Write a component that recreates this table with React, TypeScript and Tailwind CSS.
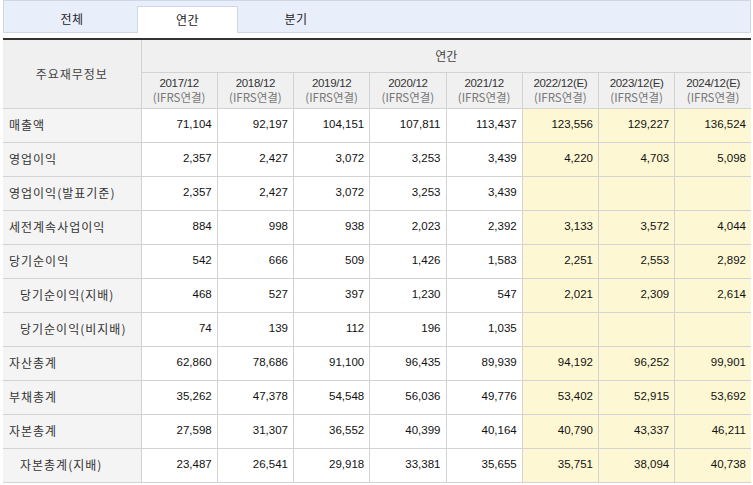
import React from 'react';

const years = [
  { label: '2017/12', est: false },
  { label: '2018/12', est: false },
  { label: '2019/12', est: false },
  { label: '2020/12', est: false },
  { label: '2021/12', est: false },
  { label: '2022/12(E)', est: true },
  { label: '2023/12(E)', est: true },
  { label: '2024/12(E)', est: true },
];

interface Row {
  name: string;
  sub?: boolean;
  values: string[];
}

const rows: Row[] = [
  { name: '매출액', values: ['71,104', '92,197', '104,151', '107,811', '113,437', '123,556', '129,227', '136,524'] },
  { name: '영업이익', values: ['2,357', '2,427', '3,072', '3,253', '3,439', '4,220', '4,703', '5,098'] },
  { name: '영업이익(발표기준)', values: ['2,357', '2,427', '3,072', '3,253', '3,439', '', '', ''] },
  { name: '세전계속사업이익', values: ['884', '998', '938', '2,023', '2,392', '3,133', '3,572', '4,044'] },
  { name: '당기순이익', values: ['542', '666', '509', '1,426', '1,583', '2,251', '2,553', '2,892'] },
  { name: '당기순이익(지배)', sub: true, values: ['468', '527', '397', '1,230', '547', '2,021', '2,309', '2,614'] },
  { name: '당기순이익(비지배)', sub: true, values: ['74', '139', '112', '196', '1,035', '', '', ''] },
  { name: '자산총계', values: ['62,860', '78,686', '91,100', '96,435', '89,939', '94,192', '96,252', '99,901'] },
  { name: '부채총계', values: ['35,262', '47,378', '54,548', '56,036', '49,776', '53,402', '52,915', '53,692'] },
  { name: '자본총계', values: ['27,598', '31,307', '36,552', '40,399', '40,164', '40,790', '43,337', '46,211'] },
  { name: '자본총계(지배)', sub: true, values: ['23,487', '26,541', '29,918', '33,381', '35,655', '35,751', '38,094', '40,738'] },
];

const kr = { fontFamily: '"Noto Sans CJK KR", "Noto Sans", sans-serif' };
const num = { fontFamily: '"Liberation Sans", Arial, sans-serif' };

export default function App() {
  return (
    <div className="w-[753px] h-[485px] bg-white overflow-hidden pl-[3px]" style={kr}>
      {/* tabs */}
      <div className="w-[748px] h-[33px] bg-[#e9effa] border border-[#cfd7e6] flex items-end relative">
        <div className="w-[100px] ml-[18px] h-[26px] flex items-center justify-center text-[12px] text-[#222] tracking-[0.5px]">전체</div>
        <div className="w-[101px] ml-[15px] h-[27px] -mb-px bg-white border border-b-0 border-[#cfd7e6] flex items-center justify-center text-[12px] text-[#222] tracking-[0.5px]">연간</div>
        <div className="w-[100px] ml-[8px] h-[26px] flex items-center justify-center text-[12px] text-[#222] tracking-[0.5px]">분기</div>
      </div>

      <table className="mt-[5px] w-[748px] table-fixed border-collapse border-t-2 border-t-[#333]">
        <colgroup>
          <col className="w-[138px]" />
          {years.map(y => <col key={y.label} />)}
        </colgroup>
        <thead>
          <tr className="h-[33px]">
            <th rowSpan={2} className="bg-[#f0f0f0] border-r border-b border-[#d3d3d3] font-normal text-[12px] text-[#444] tracking-[1px]">
              주요재무정보
            </th>
            <th colSpan={8} className="bg-[#f0f0f0] border-b border-[#d3d3d3] font-normal text-[12px] text-[#444]">
              연간
            </th>
          </tr>
          <tr className="h-[36px]">
            {years.map((y, i) => (
              <th
                key={y.label}
                className={`bg-[#f0f0f0] border-b border-[#d3d3d3] font-normal leading-[14px] ${i < years.length - 1 ? 'border-r' : ''}`}
              >
                <div className="text-[11.5px] text-[#333] tracking-[-0.3px]" style={num}>{y.label}</div>
                <div className="text-[11.5px] text-[#777]">(IFRS연결)</div>
              </th>
            ))}
          </tr>
        </thead>
        <tbody>
          {rows.map(r => (
            <tr key={r.name} className="h-[34px]">
              <td className={`bg-[#f4f4f4] border-r border-b border-[#d3d3d3] text-[12px] text-[#333] tracking-[1px] ${r.sub ? 'pl-[17px]' : 'pl-[6px]'}`}>
                {r.name}
              </td>
              {r.values.map((v, i) => (
                <td
                  key={i}
                  className={`border-b border-[#d3d3d3] text-right pr-[5px] text-[11.5px] text-[#111] ${years[i].est ? 'bg-[#fdf8d3]' : 'bg-white'} ${i < r.values.length - 1 ? 'border-r' : ''}`}
                  style={num}
                >
                  {v}
                </td>
              ))}
            </tr>
          ))}
        </tbody>
      </table>
    </div>
  );
}
